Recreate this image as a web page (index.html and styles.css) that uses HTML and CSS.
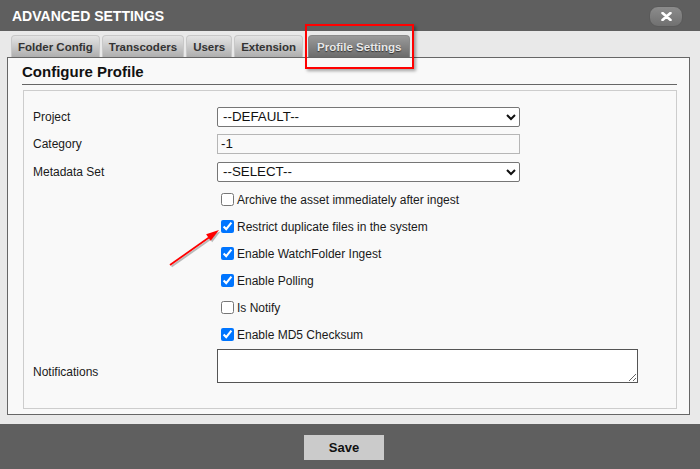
FILE: index.html
```html
<!DOCTYPE html>
<html>
<head>
<meta charset="utf-8">
<link rel="stylesheet" href="styles.css">
</head>
<body>
<div class="dialog">
  <header class="titlebar">
    <h1 class="title">ADVANCED SETTINGS</h1>
    <button class="close" type="button" aria-label="Close">
      <svg width="11" height="9" viewBox="0 0 11 9"><path d="M1.5 1 L9.5 8 M9.5 1 L1.5 8" stroke="#fff" stroke-width="2.6" stroke-linecap="round"/></svg>
    </button>
  </header>
  <main class="content">
    <nav class="tabs">
      <span class="tab">Folder Config</span>
      <span class="tab">Transcoders</span>
      <span class="tab">Users</span>
      <span class="tab">Extension</span>
      <span class="tab active">Profile Settings</span>
    </nav>
    <section class="panel">
      <h2 class="heading">Configure Profile</h2>
      <div class="box">
        <form class="form">
          <label class="lbl">Project</label>
          <div class="ctl"><select class="sel"><option>--DEFAULT--</option></select></div>
          <label class="lbl">Category</label>
          <div class="ctl"><input class="txt" type="text" value="-1" readonly></div>
          <label class="lbl">Metadata Set</label>
          <div class="ctl"><select class="sel"><option>--SELECT--</option></select></div>
          <div class="ctl chk"><input type="checkbox"><span>Archive the asset immediately after ingest</span></div>
          <div class="ctl chk"><input type="checkbox" checked><span>Restrict duplicate files in the system</span></div>
          <div class="ctl chk"><input type="checkbox" checked><span>Enable WatchFolder Ingest</span></div>
          <div class="ctl chk"><input type="checkbox" checked><span>Enable Polling</span></div>
          <div class="ctl chk"><input type="checkbox"><span>Is Notify</span></div>
          <div class="ctl chk"><input type="checkbox" checked><span>Enable MD5 Checksum</span></div>
          <label class="lbl notif">Notifications</label>
          <div class="ctl area"><textarea class="ta"></textarea></div>
        </form>
      </div>
    </section>
  </main>
  <footer class="footer">
    <button class="save" type="button">Save</button>
  </footer>
  <div class="highlight"></div>
  <svg class="arrow" width="70" height="55" viewBox="0 0 70 55">
    <g transform="translate(1.5,1.5)" opacity="0.25">
      <path d="M10 45 L49 17.5" stroke="#000" stroke-width="2"/>
      <path d="M59 10 L50.7 20.8 L46.1 14.3 Z" fill="#000"/>
    </g>
    <path d="M10 45 L49 17.5" stroke="#f00" stroke-width="1.8"/>
    <path d="M59 10 L50.7 20.8 L46.1 14.3 Z" fill="#f00"/>
  </svg>
</div>
</body>
</html>
```

FILE: styles.css
```css
* { box-sizing: border-box; }
html, body { margin: 0; padding: 0; }
body { width: 700px; height: 469px; overflow: hidden; font-family: "Liberation Sans", Arial, sans-serif; }

.dialog {
  position: relative;
  width: 700px;
  height: 469px;
  display: flex;
  flex-direction: column;
}

.titlebar {
  height: 31px;
  background: #5f5f5f;
  display: flex;
  align-items: center;
  justify-content: space-between;
  padding: 0 17px 0 12px;
}
.title {
  margin: 0;
  font-size: 14px;
  font-weight: bold;
  color: #fff;
}
.close {
  width: 34px;
  height: 21px;
  margin-top: 1px;
  border: 1px solid #5a5a5a;
  border-radius: 9px;
  background: linear-gradient(#8c8c8c, #707070);
  display: flex;
  align-items: center;
  justify-content: center;
  padding: 0;
}
.close svg { display: block; }

.content {
  height: 393px;
  background: #e9e9e9;
  padding: 4px 10px 0 7px;
}

.tabs {
  height: 22px;
  display: flex;
  gap: 2px;
  padding-left: 4px;
}
.tab {
  height: 22px;
  line-height: 22px;
  padding: 0 6px;
  font-size: 11.5px;
  font-weight: bold;
  color: #333;
  border-radius: 4px 4px 0 0;
  background: linear-gradient(#e4e4e4, #aeaeae);
  border: 1px solid #c8c8c8;
  border-bottom: none;
}
.tab.active {
  margin-left: 3px;
  padding: 0 8px;
  color: #e8e8e8;
  background: linear-gradient(#9a9a9a, #6c6c6c);
  border-color: #8a8a8a;
  text-shadow: 0 1px 1px #333;
}

.panel {
  height: 358px;
  background: #f9f9f9;
  border: 1px solid #666;
  display: flex;
  flex-direction: column;
  padding-bottom: 5px;
}
.heading {
  margin: 0 12px 0 14px;
  padding: 4px 0 2px 0;
  line-height: 20px;
  font-size: 15px;
  font-weight: bold;
  color: #111;
  border-bottom: 1px solid #666;
}
.box {
  flex: 1;
  margin: 5px 12px 0 15px;
  border: 1px solid #cdcdcd;
  padding: 12px 0 0 9px;
}

.form {
  display: grid;
  grid-template-columns: 184px 1fr;
  grid-template-rows: 27px 27px 29px repeat(6, 27px) auto;
  font-size: 12px;
  color: #1a1a1a;
}
.lbl {
  grid-column: 1;
  display: flex;
  align-items: center;
}
.ctl {
  grid-column: 2;
  display: flex;
  align-items: center;
}
.sel {
  width: 303px;
  height: 20px;
  font-family: "Liberation Sans", Arial, sans-serif;
  font-size: 13.33px;
  color: #111;
  background: #fff;
  border: 1px solid #767676;
  border-radius: 2px;
  padding: 0 0 0 1px;
}
.txt {
  width: 303px;
  height: 20px;
  font-family: "Liberation Sans", Arial, sans-serif;
  font-size: 13.33px;
  color: #111;
  background: #f9f9f9;
  border: 1px solid #b6b6b6;
  padding: 0 3px;
}
.chk span { line-height: 14px; }
.chk input {
  width: 13px;
  height: 13px;
  margin: 0 3px 0 4px;
}
.notif {
  align-items: flex-start;
  padding-top: 17px;
  line-height: 14px;
}
.area { padding-top: 1px; }
.ta {
  width: 421px;
  height: 34px;
  border: 1px solid #555;
  background: #fff;
  resize: both;
  display: block;
}

.footer {
  height: 45px;
  background: #5f5f5f;
  display: flex;
  justify-content: center;
  align-items: flex-start;
  padding: 11px 12px 0 0;
}
.save {
  width: 80px;
  height: 25px;
  border: none;
  background: #cbcbcb;
  font-family: "Liberation Sans", Arial, sans-serif;
  font-size: 13px;
  font-weight: bold;
  color: #111;
  padding: 0;
}

.highlight {
  position: absolute;
  left: 305px;
  top: 24px;
  width: 109px;
  height: 45px;
  border: 2px solid #f00;
  box-shadow: 2px 2px 3px rgba(0,0,0,0.35);
}
.arrow {
  position: absolute;
  left: 160px;
  top: 220px;
}
```
